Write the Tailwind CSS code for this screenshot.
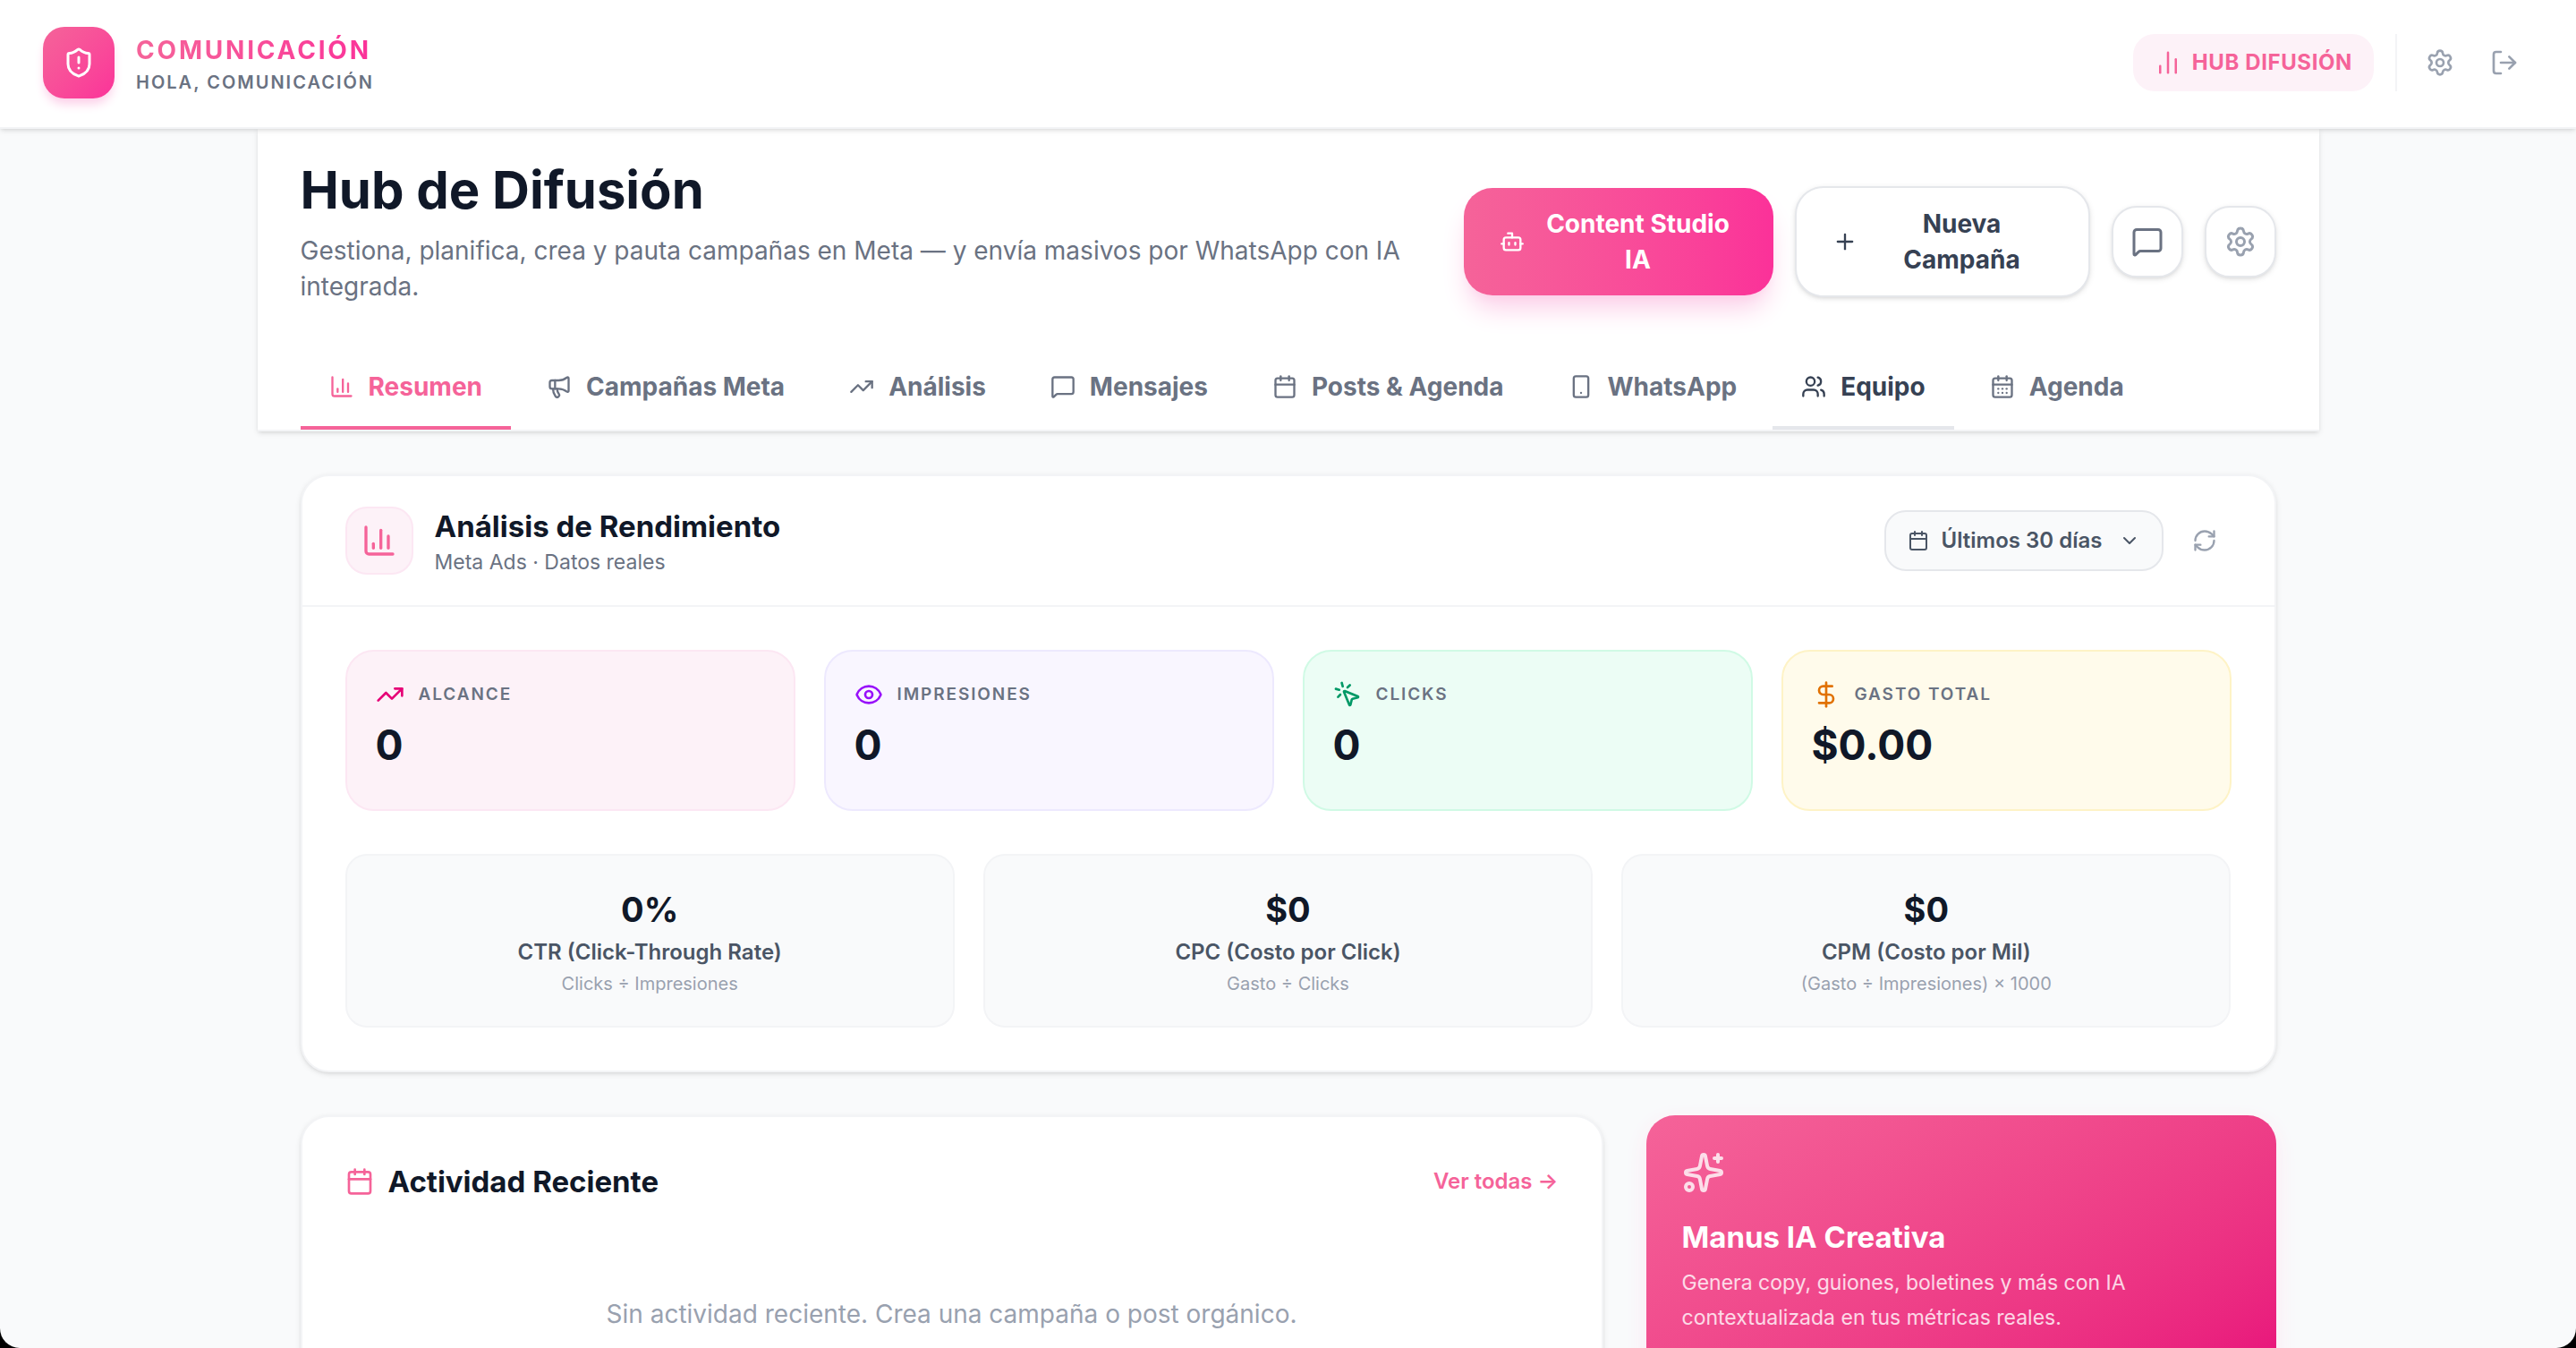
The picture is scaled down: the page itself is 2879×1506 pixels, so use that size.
<!DOCTYPE html>
<html lang="es">
<head>
    <meta charset="UTF-8">
    <meta name="viewport" content="width=device-width, initial-scale=1.0">
    <title>Hub de Difusión</title>
    <script src="https://cdn.jsdelivr.net/npm/@tailwindcss/browser@4"></script>
</head>
<body class="bg-black font-['Inter','Liberation_Sans',sans-serif] text-gray-900 antialiased">
    <!-- Iconos compartidos -->
    <svg class="hidden" aria-hidden="true">
        <symbol id="i-chart" viewBox="0 0 24 24"><path d="M3 3v16a2 2 0 0 0 2 2h16"/><path d="M18 17V9"/><path d="M13 17V5"/><path d="M8 17v-3"/></symbol>
        <symbol id="i-bars" viewBox="0 0 24 24"><path d="M5 21v-6"/><path d="M12 21V3"/><path d="M19 21V9"/></symbol>
        <symbol id="i-shield" viewBox="0 0 24 24"><path d="M20 13c0 5-3.5 7.5-7.66 8.95a1 1 0 0 1-.67-.01C7.5 20.5 4 18 4 13V6a1 1 0 0 1 1-1c2 0 4.500-1.200 6.240-2.720a1.170 1.170 0 0 1 1.520 0C14.510 3.810 17 5 19 5a1 1 0 0 1 1 1z"/><path d="M12 8v4"/><path d="M12 16h.01"/></symbol>
        <symbol id="i-gear" viewBox="0 0 24 24"><path d="M9.671 4.136a2.34 2.34 0 0 1 4.659 0 2.34 2.34 0 0 0 3.319 1.915 2.34 2.34 0 0 1 2.33 4.033 2.34 2.34 0 0 0 0 3.831 2.34 2.34 0 0 1-2.33 4.033 2.34 2.34 0 0 0-3.319 1.915 2.34 2.34 0 0 1-4.659 0 2.34 2.34 0 0 0-3.32-1.915 2.34 2.34 0 0 1-2.33-4.033 2.34 2.34 0 0 0 0-3.831A2.34 2.34 0 0 1 6.35 6.051a2.34 2.34 0 0 0 3.319-1.915"/><circle cx="12" cy="12" r="3"/></symbol>
        <symbol id="i-logout" viewBox="0 0 24 24"><path d="m16 17 5-5-5-5"/><path d="M21 12H9"/><path d="M9 21H5a2 2 0 0 1-2-2V5a2 2 0 0 1 2-2h4"/></symbol>
        <symbol id="i-bot" viewBox="0 0 24 24"><path d="M12 8V4H8"/><rect width="16" height="12" x="4" y="8" rx="2"/><path d="M2 14h2"/><path d="M20 14h2"/><path d="M15 13v2"/><path d="M9 13v2"/></symbol>
        <symbol id="i-plus" viewBox="0 0 24 24"><path d="M5 12h14"/><path d="M12 5v14"/></symbol>
        <symbol id="i-message" viewBox="0 0 24 24"><path d="M22 17a2 2 0 0 1-2 2H6.828a2 2 0 0 0-1.414.586l-2.202 2.202A.71.71 0 0 1 2 21.286V5a2 2 0 0 1 2-2h16a2 2 0 0 1 2 2z"/></symbol>
        <symbol id="i-megaphone" viewBox="0 0 24 24"><path d="M11 6a13 13 0 0 0 8.400-2.800A1 1 0 0 1 21 4v12a1 1 0 0 1-1.600.8A13 13 0 0 0 11 14H5a2 2 0 0 1-2-2V8a2 2 0 0 1 2-2z"/><path d="M6 14a12 12 0 0 0 2.400 7.200 2 2 0 0 0 3.200-2.400A8 8 0 0 1 10 14"/><path d="M8 6v8"/></symbol>
        <symbol id="i-trend" viewBox="0 0 24 24"><path d="M16 7h6v6"/><path d="m22 7-8.500 8.500-5-5L2 17"/></symbol>
        <symbol id="i-calendar" viewBox="0 0 24 24"><path d="M8 2v4"/><path d="M16 2v4"/><rect width="18" height="18" x="3" y="4" rx="2"/><path d="M3 10h18"/></symbol>
        <symbol id="i-calendar-days" viewBox="0 0 24 24"><path d="M8 2v4"/><path d="M16 2v4"/><rect width="18" height="18" x="3" y="4" rx="2"/><path d="M3 10h18"/><path d="M8 14h.01"/><path d="M12 14h.01"/><path d="M16 14h.01"/><path d="M8 18h.01"/><path d="M12 18h.01"/><path d="M16 18h.01"/></symbol>
        <symbol id="i-phone" viewBox="0 0 24 24"><rect width="14" height="20" x="5" y="2" rx="2"/><path d="M12 18h.01"/></symbol>
        <symbol id="i-users" viewBox="0 0 24 24"><path d="M16 21v-2a4 4 0 0 0-4-4H6a4 4 0 0 0-4 4v2"/><path d="M16 3.128a4 4 0 0 1 0 7.744"/><path d="M22 21v-2a4 4 0 0 0-3-3.870"/><circle cx="9" cy="7" r="4"/></symbol>
        <symbol id="i-chevron" viewBox="0 0 24 24"><path d="m6 9 6 6 6-6"/></symbol>
        <symbol id="i-refresh" viewBox="0 0 24 24"><path d="M3 12a9 9 0 0 1 9-9 9.750 9.750 0 0 1 6.740 2.740L21 8"/><path d="M21 3v5h-5"/><path d="M21 12a9 9 0 0 1-9 9 9.750 9.750 0 0 1-6.740-2.740L3 16"/><path d="M8 16H3v5"/></symbol>
        <symbol id="i-eye" viewBox="0 0 24 24"><path d="M2.062 12.348a1 1 0 0 1 0-.696 10.750 10.750 0 0 1 19.876 0 1 1 0 0 1 0 .696 10.750 10.750 0 0 1-19.876 0"/><circle cx="12" cy="12" r="3"/></symbol>
        <symbol id="i-click" viewBox="0 0 24 24"><path d="M14 4.100 12 6"/><path d="m5.100 8-2.900-.8"/><path d="m6 12-1.900 2"/><path d="M7.200 2.200 8 5.100"/><path d="M9.037 9.690a.498.498 0 0 1 .653-.653l11 4.500a.5.5 0 0 1-.074.949l-4.349 1.041a1 1 0 0 0-.74.739l-1.040 4.350a.5.5 0 0 1-.950.074z"/></symbol>
        <symbol id="i-dollar" viewBox="0 0 24 24"><path d="M12 2v20"/><path d="M17 5H9.500a3.500 3.500 0 0 0 0 7h5a3.500 3.500 0 0 1 0 7H6"/></symbol>
        <symbol id="i-sparkles" viewBox="0 0 24 24"><path d="M11.017 2.814a1 1 0 0 1 1.966 0l1.051 5.558a2 2 0 0 0 1.594 1.594l5.558 1.051a1 1 0 0 1 0 1.966l-5.558 1.051a2 2 0 0 0-1.594 1.594l-1.051 5.558a1 1 0 0 1-1.966 0l-1.051-5.558a2 2 0 0 0-1.594-1.594l-5.558-1.051a1 1 0 0 1 0-1.966l5.558-1.051a2 2 0 0 0 1.594-1.594z"/><path d="M20 2v4"/><path d="M22 4h-4"/><circle cx="4" cy="20" r="2"/></symbol>
    </svg>

    <div class="flex h-screen flex-col overflow-hidden rounded-b-[22px] bg-gray-50">
        <header class="relative z-10 flex shrink-0 items-center justify-between border-b-2 border-gray-100 bg-white px-12 pt-[30px] pb-8 shadow-[0_2px_6px_rgb(0_0_0/0.1),0_2px_4px_-2px_rgb(0_0_0/0.1)]">
            <div class="flex items-center gap-6">
                <div class="flex size-20 items-center justify-center rounded-3xl bg-linear-to-br from-[#f56399] to-[#fb3199] text-white shadow-[0_8px_12px_-2px_#fccee8]">
                    <svg class="size-9 fill-none stroke-current stroke-2 [stroke-linecap:round] [stroke-linejoin:round]"><use href="#i-shield"/></svg>
                </div>
                <div class="pt-2">
                    <p class="w-fit bg-linear-to-r from-[#f56399] to-[#fb3199] bg-clip-text text-[28px] leading-9 font-bold tracking-widest text-transparent">COMUNICACIÓN</p>
                    <p class="text-[20px] leading-9 font-semibold tracking-widest text-gray-500">HOLA, COMUNICACIÓN</p>
                </div>
            </div>
            <nav class="flex items-center">
                <a href="#" class="flex h-16 items-center gap-3 rounded-3xl bg-pink-50 px-6 text-[24px] font-bold tracking-wide text-[#f56399]">
                    <svg class="size-[30px] fill-none stroke-current stroke-2 [stroke-linecap:round] [stroke-linejoin:round]"><use href="#i-bars"/></svg>
                    HUB DIFUSIÓN
                </a>
                <div class="mr-4 ml-6 h-16 w-0.5 bg-gray-100"></div>
                <div class="flex gap-2 text-gray-400">
                    <button type="button" aria-label="Ajustes" class="p-4"><svg class="size-8 fill-none stroke-current stroke-2 [stroke-linecap:round] [stroke-linejoin:round]"><use href="#i-gear"/></svg></button>
                    <button type="button" aria-label="Salir" class="p-4"><svg class="size-8 fill-none stroke-current stroke-2 [stroke-linecap:round] [stroke-linejoin:round]"><use href="#i-logout"/></svg></button>
                </div>
            </nav>
        </header>

        <div class="mx-auto w-full max-w-[2304px]">
            <section class="border-b-2 border-gray-100 bg-white px-12 pt-8 shadow-[0_2px_6px_rgb(0_0_0/0.1),0_2px_4px_-2px_rgb(0_0_0/0.1)]">
                <div class="flex items-end justify-between gap-6">
                    <div class="w-[1276px]">
                        <h1 class="text-[58px] leading-[72px] font-bold">Hub de Difusión</h1>
                        <p class="mt-3 text-[28px] leading-10 text-gray-500">Gestiona, planifica, crea y pauta campañas en Meta — y envía masivos por WhatsApp con IA integrada.</p>
                    </div>
                    <div class="mb-2 flex shrink-0 items-center gap-6">
                        <button type="button" class="flex w-[346px] items-center gap-4 rounded-4xl bg-linear-to-r from-[#f56399] to-[#fb3199] px-10 py-5 text-[28px] leading-10 font-bold text-white shadow-[0_20px_30px_-6px_#fccee8,0_8px_12px_-8px_#fccee8]">
                            <svg class="size-7 shrink-0 fill-none stroke-current stroke-2 [stroke-linecap:round] [stroke-linejoin:round]"><use href="#i-bot"/></svg>
                            <span class="flex-1">Content Studio IA</span>
                        </button>
                        <button type="button" class="flex w-[330px] items-center gap-4 rounded-4xl border-2 border-gray-200 bg-white px-10 py-5 text-[28px] leading-10 font-bold text-gray-700 shadow-[0_2px_6px_rgb(0_0_0/0.1),0_2px_4px_-2px_rgb(0_0_0/0.1)]">
                            <svg class="size-7 shrink-0 fill-none stroke-current stroke-2 [stroke-linecap:round] [stroke-linejoin:round]"><use href="#i-plus"/></svg>
                            <span class="flex-1">Nueva Campaña</span>
                        </button>
                        <button type="button" aria-label="Mensajes" class="flex size-20 items-center justify-center rounded-[28px] border-2 border-gray-200 bg-white text-gray-500 shadow-[0_2px_6px_rgb(0_0_0/0.1),0_2px_4px_-2px_rgb(0_0_0/0.1)]">
                            <svg class="size-9 fill-none stroke-current stroke-2 [stroke-linecap:round] [stroke-linejoin:round]"><use href="#i-message"/></svg>
                        </button>
                        <button type="button" aria-label="Configuración" class="flex size-20 items-center justify-center rounded-[28px] border-2 border-gray-200 bg-white text-gray-400 shadow-[0_2px_6px_rgb(0_0_0/0.1),0_2px_4px_-2px_rgb(0_0_0/0.1)]">
                            <svg class="size-9 fill-none stroke-current stroke-2 [stroke-linecap:round] [stroke-linejoin:round]"><use href="#i-gear"/></svg>
                        </button>
                    </div>
                </div>

                <nav class="mt-12 flex gap-2 text-[28px] leading-10 font-bold text-gray-500">
                    <a href="#" class="flex items-center gap-4 border-b-4 border-[#f56399] px-8 py-6 text-[#f56399]"><svg class="size-7 fill-none stroke-current stroke-2 [stroke-linecap:round] [stroke-linejoin:round]"><use href="#i-chart"/></svg>Resumen</a>
                    <a href="#" class="flex items-center gap-4 border-b-4 border-transparent px-8 py-6"><svg class="size-7 fill-none stroke-current stroke-2 [stroke-linecap:round] [stroke-linejoin:round]"><use href="#i-megaphone"/></svg>Campañas Meta</a>
                    <a href="#" class="flex items-center gap-4 border-b-4 border-transparent px-8 py-6"><svg class="size-7 fill-none stroke-current stroke-2 [stroke-linecap:round] [stroke-linejoin:round]"><use href="#i-trend"/></svg>Análisis</a>
                    <a href="#" class="flex items-center gap-4 border-b-4 border-transparent px-8 py-6"><svg class="size-7 fill-none stroke-current stroke-2 [stroke-linecap:round] [stroke-linejoin:round]"><use href="#i-message"/></svg>Mensajes</a>
                    <a href="#" class="flex items-center gap-4 border-b-4 border-transparent px-8 py-6"><svg class="size-7 fill-none stroke-current stroke-2 [stroke-linecap:round] [stroke-linejoin:round]"><use href="#i-calendar"/></svg>Posts &amp; Agenda</a>
                    <a href="#" class="flex items-center gap-4 border-b-4 border-transparent px-8 py-6"><svg class="size-7 fill-none stroke-current stroke-2 [stroke-linecap:round] [stroke-linejoin:round]"><use href="#i-phone"/></svg>WhatsApp</a>
                    <a href="#" class="flex items-center gap-4 border-b-4 border-gray-200 px-8 py-6 text-gray-700"><svg class="size-7 fill-none stroke-current stroke-2 [stroke-linecap:round] [stroke-linejoin:round]"><use href="#i-users"/></svg>Equipo</a>
                    <a href="#" class="flex items-center gap-4 border-b-4 border-transparent px-8 py-6"><svg class="size-7 fill-none stroke-current stroke-2 [stroke-linecap:round] [stroke-linejoin:round]"><use href="#i-calendar-days"/></svg>Agenda</a>
                </nav>
            </section>

            <main class="flex flex-col gap-12 p-12">
                <section class="rounded-4xl border-2 border-gray-100 bg-white shadow-[0_2px_6px_rgb(0_0_0/0.1),0_2px_4px_-2px_rgb(0_0_0/0.1)]">
                    <div class="flex items-center justify-between border-b-2 border-gray-100 px-12 py-8">
                        <div class="flex items-center gap-6">
                            <div class="flex size-[76px] items-center justify-center rounded-3xl border-2 border-pink-100 bg-pink-50 text-[#f56399]">
                                <svg class="size-10 fill-none stroke-current stroke-2 [stroke-linecap:round] [stroke-linejoin:round]"><use href="#i-chart"/></svg>
                            </div>
                            <div>
                                <h2 class="text-[33px] leading-[48px] font-bold">Análisis de Rendimiento</h2>
                                <p class="text-[23px] leading-8 text-gray-500">Meta Ads · Datos reales</p>
                            </div>
                        </div>
                        <div class="flex items-center gap-4">
                            <div class="relative text-gray-600">
                                <svg class="pointer-events-none absolute top-[22px] left-[26px] size-6 fill-none stroke-current stroke-2 [stroke-linecap:round] [stroke-linejoin:round]"><use href="#i-calendar"/></svg>
                                <select aria-label="Periodo" class="h-[68px] w-[312px] appearance-none rounded-3xl border-2 border-gray-200 bg-gray-50 pl-[62px] text-[24px] font-semibold">
                                    <option>Últimos 30 días</option>
                                </select>
                                <svg class="pointer-events-none absolute top-[22px] right-[26px] size-6 fill-none stroke-current stroke-2 [stroke-linecap:round] [stroke-linejoin:round]"><use href="#i-chevron"/></svg>
                            </div>
                            <button type="button" aria-label="Actualizar" class="p-4 text-gray-400"><svg class="size-7 fill-none stroke-current stroke-2 [stroke-linecap:round] [stroke-linejoin:round]"><use href="#i-refresh"/></svg></button>
                        </div>
                    </div>

                    <div class="flex flex-col gap-12 p-12">
                        <div class="grid grid-cols-4 gap-8">
                            <div class="rounded-4xl border-2 border-pink-100 bg-pink-50 px-8 pt-8 pb-10">
                                <div class="flex items-center gap-4 text-[19px] leading-8 font-semibold tracking-widest text-gray-500">
                                    <svg class="size-8 fill-none stroke-pink-600 stroke-2 [stroke-linecap:round] [stroke-linejoin:round]"><use href="#i-trend"/></svg>ALCANCE
                                </div>
                                <p class="mt-2 text-[46px] leading-16 font-bold">0</p>
                            </div>
                            <div class="rounded-4xl border-2 border-violet-100 bg-[#f9f6ff] px-8 pt-8 pb-10">
                                <div class="flex items-center gap-4 text-[19px] leading-8 font-semibold tracking-widest text-gray-500">
                                    <svg class="size-8 fill-none stroke-purple-600 stroke-2 [stroke-linecap:round] [stroke-linejoin:round]"><use href="#i-eye"/></svg>IMPRESIONES
                                </div>
                                <p class="mt-2 text-[46px] leading-16 font-bold">0</p>
                            </div>
                            <div class="rounded-4xl border-2 border-emerald-100 bg-emerald-50 px-8 pt-8 pb-10">
                                <div class="flex items-center gap-4 text-[19px] leading-8 font-semibold tracking-widest text-gray-500">
                                    <svg class="size-8 fill-none stroke-emerald-600 stroke-2 [stroke-linecap:round] [stroke-linejoin:round]"><use href="#i-click"/></svg>CLICKS
                                </div>
                                <p class="mt-2 text-[46px] leading-16 font-bold">0</p>
                            </div>
                            <div class="rounded-4xl border-2 border-amber-100 bg-amber-50 px-8 pt-8 pb-10">
                                <div class="flex items-center gap-4 text-[19px] leading-8 font-semibold tracking-widest text-gray-500">
                                    <svg class="size-8 fill-none stroke-amber-600 stroke-2 [stroke-linecap:round] [stroke-linejoin:round]"><use href="#i-dollar"/></svg>GASTO TOTAL
                                </div>
                                <p class="mt-2 text-[46px] leading-16 font-bold">$0.00</p>
                            </div>
                        </div>

                        <div class="grid grid-cols-3 gap-8 text-center">
                            <div class="rounded-3xl border-2 border-gray-100 bg-gray-50 p-8">
                                <p class="text-[38px] leading-14 font-bold">0%</p>
                                <p class="mt-1 text-[24px] leading-8 font-semibold text-gray-600">CTR (Click-Through Rate)</p>
                                <p class="mt-1 text-[20px] leading-[30px] text-gray-400">Clicks ÷ Impresiones</p>
                            </div>
                            <div class="rounded-3xl border-2 border-gray-100 bg-gray-50 p-8">
                                <p class="text-[38px] leading-14 font-bold">$0</p>
                                <p class="mt-1 text-[24px] leading-8 font-semibold text-gray-600">CPC (Costo por Click)</p>
                                <p class="mt-1 text-[20px] leading-[30px] text-gray-400">Gasto ÷ Clicks</p>
                            </div>
                            <div class="rounded-3xl border-2 border-gray-100 bg-gray-50 p-8">
                                <p class="text-[38px] leading-14 font-bold">$0</p>
                                <p class="mt-1 text-[24px] leading-8 font-semibold text-gray-600">CPM (Costo por Mil)</p>
                                <p class="mt-1 text-[20px] leading-[30px] text-gray-400">(Gasto ÷ Impresiones) × 1000</p>
                            </div>
                        </div>
                    </div>
                </section>

                <div class="grid grid-cols-3 gap-12">
                    <section class="col-span-2 rounded-4xl border-2 border-gray-100 bg-white p-12 shadow-[0_2px_6px_rgb(0_0_0/0.1),0_2px_4px_-2px_rgb(0_0_0/0.1)]">
                        <div class="flex items-center justify-between">
                            <h2 class="flex items-center gap-4 text-[33px] leading-[48px] font-bold">
                                <svg class="size-8 fill-none stroke-[#f56399] stroke-2 [stroke-linecap:round] [stroke-linejoin:round]"><use href="#i-calendar"/></svg>
                                Actividad Reciente
                            </h2>
                            <a href="#" class="text-[24px] font-semibold text-[#f56399]">Ver todas →</a>
                        </div>
                        <p class="py-26 text-center text-[28px] leading-10 text-gray-400">Sin actividad reciente. Crea una campaña o post orgánico.</p>
                    </section>
                    <section class="rounded-4xl bg-linear-to-br from-[#f56399] to-pink-600 p-10 text-white shadow-[0_8px_24px_#fce7f3]">
                        <svg class="size-12 fill-none stroke-current stroke-2 opacity-80 [stroke-linecap:round] [stroke-linejoin:round]"><use href="#i-sparkles"/></svg>
                        <h2 class="mt-6 text-[33px] leading-[48px] font-bold">Manus IA Creativa</h2>
                        <p class="mt-2 text-[23px] leading-[39px] text-white/80">Genera copy, guiones, boletines y más con IA contextualizada en tus métricas reales.</p>
                    </section>
                </div>
            </main>
        </div>
    </div>
</body>
</html>
